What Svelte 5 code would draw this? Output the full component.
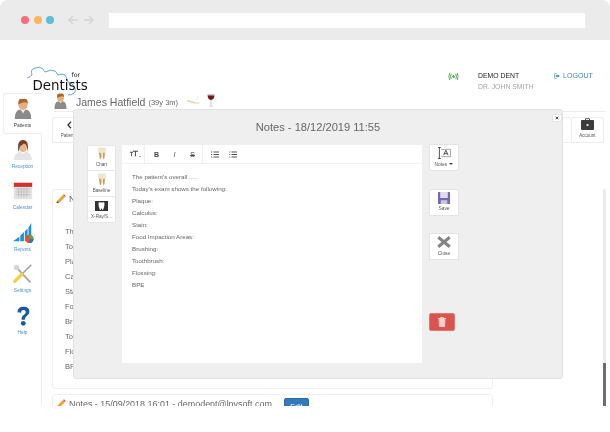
<script>
	const noteLines = [
		"The patient's overall .....",
		"Today's exam shows the following:",
		'Plaque:',
		'Calculus:',
		'Stain:',
		'Food Impaction Areas:',
		'Brushing:',
		'Toothbrush:',
		'Flossing:',
		'BPE'
	];
	const nav = ['Patients', 'Reception', 'Calendar', 'Reports', 'Settings', 'Help'];
</script>

{#snippet tooth()}
	<svg class="tooth" viewBox="0 0 10 16" preserveAspectRatio="none">
		<path d="M1 2Q1 0 3.500 .5Q5 1 6.500 .5Q9 0 9 2.500Q9 6 8 9Q7.500 13 7 15Q6 15.500 5.500 12Q5 10 4.500 12Q4 15.500 3 15Q2 13 1.800 9Q1 5 1 2Z" fill="#efe6d0" />
		<path d="M2 7Q2.500 12 3 15Q4 15.500 4.500 12L4 7ZM6 7L5.800 12Q6 15.500 7 15Q7.500 13 8 7Z" fill="#c9a262" />
	</svg>
{/snippet}

{#snippet pencil()}
	<svg class="pencil" viewBox="0 0 10 10">
		<path d="M1 7L7 1l2 2-6 6H1Z" fill="#f0a030" />
		<path d="M7 1l1-.7 1.700 1.700L9 3Z" fill="#d8503c" />
		<path d="M1 7l2 2H.5Z" fill="#444" />
	</svg>
{/snippet}

<div class="chrome">
	<span class="dot red"></span>
	<span class="dot amber"></span>
	<span class="dot teal"></span>
	<svg class="arrows" viewBox="0 0 26 10" fill="none" stroke="#d3d3d3" stroke-width="1.300">
		<path d="M10 5H1M5 1L1 5l4 4M16 5h9M21 1l4 4-4 4" />
	</svg>
	<div class="url"></div>
</div>

<div class="app">
	<header>
		<div class="logo">
			<svg class="cloud" viewBox="0 0 50 30" fill="none" stroke="#2a7fc0" stroke-width=".7">
				<path d="M1 12Q4 11 6 9Q4 3 9 2Q14 0 17 3Q18 5 19 6Q25 3 29 5Q31 7 32 9Q37 7 39 9Q41 12 42 16Q47 17 49 22Q50 26 48 27Q46 29 42 29" />
			</svg>
			<span class="for">for</span>
			<span class="brand">Dentists</span>
		</div>
		<svg class="signal" viewBox="0 0 12 10" fill="none" stroke="#3aa53a" stroke-width="1">
			<circle cx="6" cy="5" r="1" fill="#3aa53a" />
			<path d="M3.500 2Q2 5 3.500 8M8.500 2Q10 5 8.500 8M1.800 1Q0 5 1.800 9M10.200 1Q12 5 10.200 9" />
		</svg>
		<div class="user">
			<div>DEMO DENT</div>
			<div class="doctor">DR. JOHN SMITH</div>
		</div>
		<a class="logout" href="#top">
			<svg viewBox="0 0 6 6" fill="none" stroke="#3f86c6" stroke-width=".7">
				<path d="M2.500 .5H1.200Q.4 .5 .4 1.300V4.700Q.4 5.500 1.200 5.500H2.500" />
				<path d="M1.600 2.300H3.500V1.200L5.800 3 3.500 4.800V3.700H1.600Z" fill="#3f86c6" stroke="none" />
			</svg>
			LOGOUT
		</a>
	</header>

	<div class="body">
		<nav>
			{#each nav as item, i}
				<div class="nav-item" class:active={i === 0}>
					<svg class="nav-icon" viewBox="0 0 24 24">
						{#if item === 'Patients'}
							<path d="M3 23Q3 13 9 12.500L12 15l3-2.500Q21 13 21 23Z" fill="#8a8a8a" />
							<path d="M9.500 12.500L12 17l2.500-4.500Z" fill="#eee" />
							<ellipse cx="12" cy="7" rx="5" ry="6" fill="#e8ad7c" />
							<path d="M7 7Q6 0 12 1Q18 0 17 6Q14 3 7 7Z" fill="#a8652e" />
						{:else if item === 'Reception'}
							<path d="M2 23Q3 15 9 14L12 16l3-2q6 1 7 9Z" fill="#e4e4e4" />
							<ellipse cx="12" cy="9" rx="4.500" ry="5.500" fill="#eab58a" />
							<path d="M7 14Q5 1 12 1Q19 1 17 14Q17 6 13 5Q9 8 8 9Q8 12 7 14Z" fill="#7a3d22" />
							<rect x="6.500" y="7.500" width="1.600" height="3.500" fill="#3b6ea5" />
						{:else if item === 'Calendar'}
							<rect x="2" y="3" width="20" height="18" fill="#e3e3e3" />
							<rect x="2" y="3" width="20" height="4.500" fill="#d2302c" />
							<path d="M4 10h16M4 13h16M4 16h16M7 8v11M10 8v11M13 8v11M16 8v11" stroke="#b4b4b4" stroke-width=".7" />
						{:else if item === 'Reports'}
							<path d="M1 21L8 16V21ZM9 15L13 11V21H9ZM14 10L17 7V21H14ZM18 6L21 1V21H18Z" fill="#1c8fdc" />
							<circle cx="19" cy="18.500" r="4.500" fill="#e2572c" />
							<path d="M19 18.500V14a4.500 4.500 0 0 1 4.500 4.500Z" fill="#5aa63c" />
							<path d="M19 18.500h4.500A4.500 4.500 0 0 1 19 23Z" fill="#2f74c4" />
						{:else if item === 'Settings'}
							<path d="M21 2L11 12" stroke="#9a9a9a" stroke-width="1.500" />
							<path d="M4 4L20 21" stroke="#a8a8a8" stroke-width="2" />
							<circle cx="5" cy="5" r="3" fill="#d6d6d6" />
							<path d="M11 12L3 20" stroke="#f0d040" stroke-width="3.500" stroke-linecap="round" />
						{:else}
							<path d="M6 8Q6 2 12.500 2Q19 2 19 7.500Q19 10 15.500 12.500Q14 13.500 14 16H10.500Q10 12.500 13 10.500Q15 9 15 7.500Q15 5.500 12.500 5.500Q10 5.500 10 8.500Z" fill="#17589f" />
							<circle cx="12.300" cy="20" r="2.600" fill="#17589f" />
						{/if}
					</svg>
					<span>{item}</span>
				</div>
			{/each}
		</nav>

		<main>
			<div class="patient">
				<svg class="patient-icon" viewBox="0 0 18 24">
					<path d="M0 24Q0 13 6 12.500L9 15l3-2.500Q18 13 18 24Z" fill="#8a8a8a" />
					<ellipse cx="9" cy="7" rx="5" ry="6" fill="#e8ad7c" />
					<path d="M4 7Q3 0 9 1Q15 0 14 6Q11 3 4 7Z" fill="#a8652e" />
				</svg>
				<span class="name">James Hatfield</span>
				<span class="age">(39y 3m)</span>
				<svg class="cigarette" viewBox="0 0 13 8">
					<path d="M0 4.500L8 6.800" stroke="#ecd9a8" stroke-width="1.800" />
					<path d="M8 6.500L12.500 7.500" stroke="#e8e8e8" stroke-width="1.800" />
					<path d="M9 4Q12 3 10 0" stroke="#ddd" fill="none" stroke-width=".6" />
				</svg>
				<svg class="wine" viewBox="0 0 8 13">
					<path d="M.5 0H7.500Q8 5 4.500 6.500V11.500L6.500 12.500H1.500L3.500 11.500V6.500Q0 5 .5 0Z" fill="#c9c9c9" />
					<path d="M.8 1.500H7.200Q7.500 5 4 6Q.5 5 .8 1.500Z" fill="#7c1420" />
				</svg>
			</div>

			<div class="actions">
				<div class="action back">
					<svg class="chevron" viewBox="0 0 5 8" fill="none" stroke="#333" stroke-width="1.300"><path d="M4 .8L1 4l3 3.200" /></svg>
					<span>Patients</span>
				</div>
				<div class="action-group">
					<div class="action stub"></div>
					<div class="action">
						<svg class="case" viewBox="0 0 13 12">
							<path d="M4.500 2V.7h4V2" fill="none" stroke="#444" stroke-width=".9" />
							<rect y="2" width="13" height="10" rx="1" fill="#3b3b3b" />
							<rect x="5.500" y="6" width="2" height="2" fill="#ddd" />
						</svg>
						<span>Account</span>
					</div>
				</div>
			</div>

			<div class="scroller">
				<section class="card">
					<h3>
						{@render pencil()}
						<span>Notes - 18/12/2019 11:55 - demodent@lnvsoft.com</span>
					</h3>
					<div class="card-lines">
						{#each noteLines as line}
							<p>{line}</p>
						{/each}
					</div>
				</section>
				<section class="card">
					<h3>
						{@render pencil()}
						<span>Notes - 15/09/2018 16:01 - demodent@lnvsoft.com</span>
						<button class="edit">Edit</button>
					</h3>
				</section>
			</div>
			<div class="scrollbar"><div class="thumb"></div></div>
		</main>
	</div>

	<div class="modal">
		<button class="dismiss" aria-label="Dismiss">
			<svg viewBox="0 0 6 6" stroke="#333" stroke-width="1.300"><path d="M1 1l4 4M5 1L1 5" /></svg>
		</button>
		<h2>Notes - 18/12/2019 11:55</h2>
		<div class="modal-body">
			<div class="tabs">
				<div class="tab">{@render tooth()}<span>Chart</span></div>
				<div class="tab">{@render tooth()}<span>Baseline</span></div>
				<div class="tab">
					<svg class="xray" viewBox="0 0 13 10">
						<rect width="13" height="10" fill="#333" />
						<path d="M3.500 2Q3.500 1 5 1.300Q6.500 1.800 8 1.300Q9.500 1 9.500 2.500Q9.500 5 8.800 6.500Q8.300 9 7.800 9Q7 9 6.500 7Q6 9 5.200 9Q4.700 9 4.200 6.500Q3.500 5 3.500 2Z" fill="#fff" />
					</svg>
					<span>X-Ray/S...</span>
				</div>
			</div>

			<div class="editor">
				<div class="format-bar">
					<div class="format size">
						<span class="big-t"><small>T</small>T</span><i class="caret-mini"></i>
					</div>
					<div class="format marks">
						<b>B</b>
						<em>I</em>
						<s>S</s>
					</div>
					<div class="format lists">
						<svg viewBox="0 0 8 7" stroke="#555"><path d="M2.500 1H8M2.500 3.500H8M2.500 6H8M0 1h1.200M0 3.500h1.200M0 6h1.200" /></svg>
						<svg viewBox="0 0 8 7" stroke="#555"><path d="M2.500 1H8M2.500 3.500H8M2.500 6H8M.3 1h1M.3 3.500h1M.3 6h1" /></svg>
					</div>
				</div>
				<div class="editor-text">
					{#each noteLines as line}
						<p>{line}</p>
					{/each}
				</div>
			</div>

			<div class="side">
				<div class="tool">
					<svg class="tool-icon" viewBox="0 0 15 13" fill="none" stroke="#333" stroke-width=".9">
						<path d="M1 .5h3M1 12.500h3M2.500 .5v12" />
						<path d="M4.500 2.500h10v8h-10" stroke="#777" stroke-width=".7" />
						<path d="M7 9L9.500 3.500 12 9M8 7.200h3" />
					</svg>
					<span>Notes <i class="caret"></i></span>
				</div>
				<div class="tool">
					<svg class="tool-icon" viewBox="0 0 11 11">
						<rect width="11" height="11" rx=".8" fill="#7a64b4" />
						<rect x="2" width="7" height="5.500" fill="#dcdcec" />
						<rect x="2.500" y="7.500" width="6" height="3.500" fill="#c8c8d8" />
					</svg>
					<span>Save</span>
				</div>
				<div class="tool">
					<svg class="tool-icon" viewBox="0 0 11 9" stroke="#858585" stroke-width="2.400">
						<path d="M1 .8l9 7.400M10 .8L1 8.200" />
					</svg>
					<span>Close</span>
				</div>
				<button class="delete" aria-label="Delete">
					<svg viewBox="0 0 8 10" fill="none" stroke="#fbe6e6" stroke-width=".8">
						<path d="M0 1.500h8M2.500 1.500V.5h3v1M1 1.500l.4 8h5.200l.4-8" />
						<path d="M1.400 2h5.200l-.3 7.400H1.700Z" fill="#f5d0ce" stroke="none" />
					</svg>
				</button>
			</div>
		</div>
	</div>
</div>

<style>
	:global(body) {
		background: #fff;
	}
	:global(#app) {
		width: 610px;
		height: 432px;
		overflow: hidden;
		font-family: 'Liberation Sans', Arial, sans-serif;
		color: #555;
		filter: blur(0.35px);
		will-change: transform;
	}
	.chrome {
		height: 40px;
		background: #ebebeb;
		border-radius: 8px 8px 0 0;
		display: flex;
		align-items: center;
		padding: 0 25px 0 21px;
		box-sizing: border-box;
	}
	.dot {
		width: 8px;
		height: 8px;
		border-radius: 50%;
		margin-right: 4.500px;
	}
	.red {
		background: #fb6b7d;
	}
	.amber {
		background: #fdb55c;
	}
	.teal {
		background: #58bfd4;
	}
	.arrows {
		width: 26px;
		height: 10px;
		margin-left: 9.500px;
	}
	.url {
		flex: 1;
		height: 15px;
		margin-left: 15px;
		background: #fff;
	}
	.app {
		position: relative;
		height: 366px;
		overflow: hidden;
	}
	header {
		height: 53px;
		position: relative;
		display: flex;
		align-items: flex-start;
		padding: 32px 0 0 448px;
		box-sizing: border-box;
	}
	.logo {
		position: absolute;
		left: 26px;
		top: 26px;
		width: 64px;
		height: 30px;
		color: #111;
	}
	.cloud {
		position: absolute;
		left: 0;
		top: 0;
		width: 50px;
		height: 30px;
	}
	.for {
		position: absolute;
		left: 45.500px;
		top: 4.500px;
		font: 6.300px 'DejaVu Sans', sans-serif;
	}
	.brand {
		position: absolute;
		left: 6.500px;
		top: 12px;
		font: 13.400px 'DejaVu Sans', sans-serif;
	}
	.signal {
		width: 11px;
		height: 9px;
	}
	.user {
		margin-left: 19px;
		width: 76px;
		font-size: 6.850px;
		line-height: 10.500px;
		color: #222;
		margin-top: -1px;
	}
	.doctor {
		color: #a5a5a5;
	}
	.logout {
		color: #3f86c6;
		font-size: 7.100px;
		line-height: 10px;
		text-decoration: none;
		margin-top: -1px;
		white-space: nowrap;
		display: flex;
		align-items: center;
		gap: 3px;
	}
	.logout svg {
		width: 6px;
		height: 6px;
	}
	.body {
		display: flex;
		height: 313px;
	}
	nav {
		width: 42px;
		padding-left: 3px;
		box-sizing: border-box;
		border-right: 1px solid #ededed;
		height: 100%;
		flex: none;
	}
	.nav-item {
		height: 41.400px;
		display: flex;
		flex-direction: column;
		align-items: center;
		font-size: 4.800px;
		color: #4b8fcb;
		padding-top: 4px;
		box-sizing: border-box;
		margin-right: -1px;
	}
	.nav-icon {
		width: 22px;
		height: 22px;
		margin-bottom: 3px;
	}
	.nav-item.active {
		color: #444;
		background: #fff;
		border: 1px solid #ededed;
		border-right-color: #fff;
		border-radius: 3px 0 0 3px;
		height: 41px;
		padding-top: 4px;
		margin-bottom: 1px;
	}
	main {
		flex: 1;
		position: relative;
		padding-left: 10px;
		min-width: 0;
	}
	.patient {
		height: 18px;
		display: flex;
		align-items: center;
		margin-left: 2px;
		border-bottom: 1px solid #ededed;
		margin-right: 4px;
	}
	.patient-icon {
		width: 13px;
		height: 16px;
		margin: -2px 9px 0 0;
	}
	.name {
		font-size: 10.500px;
		color: #666;
	}
	.age {
		font-size: 7.500px;
		margin-left: 3px;
		color: #666;
	}
	.cigarette {
		width: 13px;
		height: 8px;
		margin: -4px 0 0 9px;
	}
	.wine {
		width: 8px;
		height: 13px;
		margin: -3px 0 0 7px;
	}
	.actions {
		display: flex;
		justify-content: space-between;
		margin: 5px 6px 0 0;
		height: 26px;
	}
	.action {
		border: 1px solid #ececec;
		border-radius: 2px;
		width: 33px;
		box-sizing: border-box;
		display: flex;
		flex-direction: column;
		align-items: center;
		justify-content: flex-end;
		font-size: 4.500px;
		padding-bottom: 4px;
		color: #555;
	}
	.action.back {
		width: 34px;
	}
	.chevron {
		width: 5px;
		height: 8px;
		margin-bottom: 4px;
	}
	.action-group {
		display: flex;
	}
	.stub {
		width: 14px;
		border-right: 0;
	}
	.case {
		width: 13px;
		height: 12px;
		margin-bottom: 3px;
	}
	.scroller {
		margin-top: 46px;
		width: 441px;
	}
	.card {
		border: 1px solid #efefef;
		border-radius: 3px;
		padding: 2px 0 0 3px;
		margin-bottom: 5px;
		box-sizing: border-box;
	}
	.card:first-child {
		height: 200px;
	}
	h3 {
		font-weight: 400;
		font-size: 8.950px;
		line-height: 14px;
		margin: 0;
		color: #666;
		display: flex;
		align-items: flex-start;
		white-space: nowrap;
	}
	.pencil {
		width: 10px;
		height: 10px;
		margin: 2px 3px 0 0;
		flex: none;
	}
	.card-lines {
		margin: 18px 0 0 9px;
	}
	.card-lines p {
		margin: 0;
		font-size: 7.500px;
		line-height: 15px;
		color: #666;
	}
	.edit {
		background: #337ab7;
		border: 1px solid #2e6da4;
		border-radius: 2px;
		color: #fff;
		font: 7px 'Liberation Sans', sans-serif;
		width: 25px;
		height: 16px;
		margin: 1px 0 0 12px;
		padding: 0;
	}
	.scrollbar {
		position: absolute;
		right: 4px;
		top: 96px;
		width: 3px;
		height: 217px;
		background: #ebebeb;
		display: flex;
		align-items: flex-end;
	}
	.thumb {
		width: 3px;
		height: 43px;
		background: #6d6d6d;
	}
	.modal {
		position: absolute;
		left: 73px;
		top: 69px;
		width: 490px;
		height: 270px;
		box-sizing: border-box;
		background: #efefef;
		border: 1px solid #e2e2e2;
		border-radius: 3px;
		padding: 0 13px;
	}
	.modal h2 {
		margin: 0;
		height: 35px;
		line-height: 35px;
		text-align: center;
		font-weight: 400;
		font-size: 11.100px;
		color: #666;
	}
	.dismiss {
		position: absolute;
		right: 0;
		top: 4px;
		width: 10px;
		height: 8px;
		background: #fff;
		border: 1px solid #e4e4e4;
		padding: 1px 2px;
		display: flex;
	}
	.modal-body {
		display: flex;
		align-items: flex-start;
	}
	.tabs {
		width: 29px;
		background: #fff;
		border: 1px solid #e6e6e6;
		border-radius: 2px;
		box-sizing: border-box;
		flex: none;
		margin-right: 6px;
	}
	.tab {
		height: 25.300px;
		box-sizing: border-box;
		display: flex;
		flex-direction: column;
		align-items: center;
		justify-content: flex-end;
		padding-bottom: 3px;
		font-size: 4.600px;
		color: #555;
		border-bottom: 1px solid #e6e6e6;
		white-space: nowrap;
	}
	.tab:last-child {
		border-bottom: 0;
	}
	.tooth {
		width: 10px;
		height: 13px;
		margin-bottom: 2px;
	}
	.xray {
		width: 13px;
		height: 10px;
		margin-bottom: 3px;
	}
	.editor {
		width: 300px;
		height: 218px;
		background: #fff;
		flex: none;
		font-size: 6.200px;
	}
	.format-bar {
		height: 19px;
		box-sizing: border-box;
		border-bottom: 1px solid #f0f0f0;
		display: flex;
		color: #444;
	}
	.format {
		display: flex;
		align-items: center;
		border-right: 1px solid #f0f0f0;
		height: 100%;
	}
	.size {
		width: 23px;
		padding-left: 8px;
		box-sizing: border-box;
	}
	.big-t {
		font-size: 8px;
		font-weight: 400;
		-webkit-text-stroke: 0.3px #444;
		line-height: 1;
		white-space: nowrap;
	}
	.big-t small {
		font-size: 5px;
	}
	.caret-mini {
		width: 0;
		height: 0;
		border: 1px solid transparent;
		border-top-color: #555;
		margin: 6px 0 0 1px;
	}
	.marks {
		width: 58px;
		padding-left: 9px;
		box-sizing: border-box;
		gap: 13px;
		font-size: 7px;
	}
	.marks b,
	.marks em,
	.marks s {
		width: 5px;
		text-align: center;
	}
	.lists {
		border: 0;
		padding-left: 8px;
		gap: 10px;
	}
	.lists svg {
		width: 8px;
		height: 7px;
	}
	.editor-text {
		padding: 7px 10px;
	}
	.editor-text p {
		margin: 0;
		line-height: 12px;
		color: #666;
	}
	.side {
		margin: -1px 0 0 7px;
		display: flex;
		flex-direction: column;
		width: 30px;
		flex: none;
	}
	.tool {
		width: 30px;
		height: 27px;
		background: #fff;
		border: 1px solid #e3e3e3;
		box-sizing: border-box;
		margin-bottom: 17.500px;
		display: flex;
		flex-direction: column;
		align-items: center;
		justify-content: flex-end;
		padding-bottom: 3.500px;
		font-size: 4.800px;
		color: #555;
		white-space: nowrap;
	}
	.tool-icon {
		width: 14px;
		height: 12px;
		margin-bottom: 2.500px;
	}
	.caret {
		display: inline-block;
		width: 0;
		height: 0;
		border: 2px solid transparent;
		border-top-color: #444;
		border-bottom: 0;
		margin-left: 1px;
		vertical-align: middle;
	}
	.delete {
		width: 26px;
		height: 18px;
		background: #d9534f;
		border: 1px solid #e57873;
		border-radius: 2px;
		margin-top: 35px;
		padding: 0;
		display: flex;
		align-items: center;
		justify-content: center;
	}
	.delete svg {
		width: 8px;
		height: 10px;
	}
</style>
